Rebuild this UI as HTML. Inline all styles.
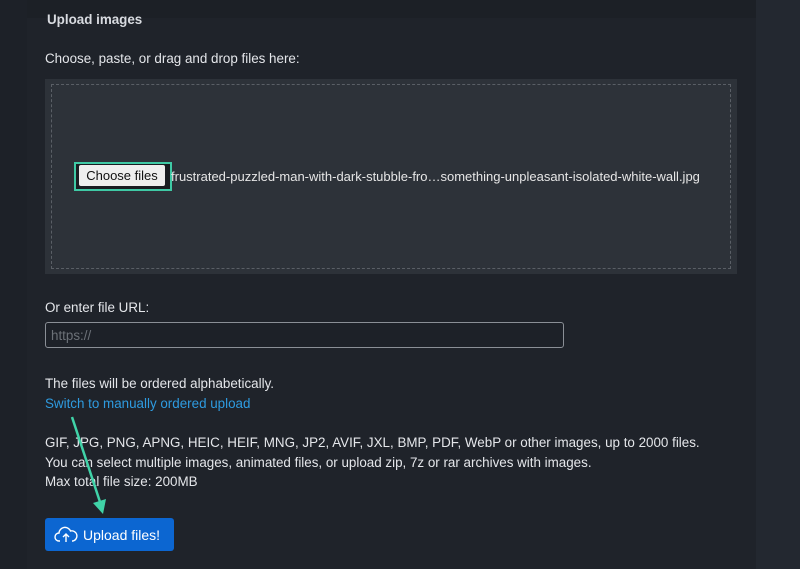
<!DOCTYPE html>
<html><head><style>
body{margin:0;width:800px;height:569px;background:#1d2128;font-family:"Liberation Sans",sans-serif;position:relative;overflow:hidden;color:#e4e6ea}
.t{position:absolute;font-size:13.4px;white-space:nowrap}
</style></head><body>
<div style="position:absolute;left:27px;top:0;width:729px;height:569px;background:#1f232a"></div>
<div style="position:absolute;left:756px;top:0;width:44px;height:569px;background:#232830"></div>
<div style="position:absolute;left:27px;top:0;width:729px;height:18px;background:#1c2026"></div>
<div class="t" style="left:47px;top:12px;font-weight:bold;color:#d8dbe0">Upload images</div>
<div class="t" style="left:45px;top:51px">Choose, paste, or drag and drop files here:</div>
<div style="position:absolute;left:45px;top:79px;width:692px;height:195px;background:#2d3239"></div>
<div style="position:absolute;left:51px;top:84px;width:678px;height:183px;border:1px dashed #5a5f66"></div>
<div style="position:absolute;left:74px;top:162px;width:94px;height:25px;border:2px solid #3fc9a5;background:#1a1d22"></div>
<div style="position:absolute;left:79px;top:165px;width:86px;height:21px;background:#efefef;border-radius:2px;color:#111;font-size:13px;text-align:center;line-height:21px">Choose files</div>
<div class="t" style="left:171px;top:169px;color:#e6e6e6;font-size:13px">frustrated-puzzled-man-with-dark-stubble-fro…something-unpleasant-isolated-white-wall.jpg</div>
<div class="t" style="left:45px;top:300px">Or enter file URL:</div>
<div style="position:absolute;left:45px;top:322px;width:517px;height:24px;border:1px solid #8a8f96;border-radius:3px;background:#1d2128"></div>
<div class="t" style="left:51px;top:328px;color:#6c7178">https://</div>
<div class="t" style="left:45px;top:376px">The files will be ordered alphabetically.</div>
<div class="t" style="left:45px;top:396px;color:#2e9be0">Switch to manually ordered upload</div>
<div class="t" style="left:45px;top:435px">GIF, JPG, PNG, APNG, HEIC, HEIF, MNG, JP2, AVIF, JXL, BMP, PDF, WebP or other images, up to 2000 files.</div>
<div class="t" style="left:45px;top:455px">You can select multiple images, animated files, or upload zip, 7z or rar archives with images.</div>
<div class="t" style="left:45px;top:474px">Max total file size: 200MB</div>
<div style="position:absolute;left:45px;top:518px;width:129px;height:33px;background:#0c66d1;border-radius:3px"></div>
<svg style="position:absolute;left:54px;top:524px" width="24" height="22" viewBox="0 0 24 22"><path d="M6 17H5a4 4 0 0 1 0-8 6 6 0 0 1 11.5-2A4.5 4.5 0 0 1 19 17h-1" fill="none" stroke="#fff" stroke-width="1.4"/><path d="M12 18v-8M9 13l3-3 3 3" fill="none" stroke="#fff" stroke-width="1.4"/></svg>
<div class="t" style="left:83px;top:527px;color:#fff;font-size:14px">Upload files!</div>
<svg style="position:absolute;left:0;top:0" width="800" height="569"><path d="M72 417 L101 505" stroke="#40d3a8" stroke-width="2.5" fill="none"/><path d="M93 503 L103 514 L106 499" fill="#40d3a8"/></svg>
</body></html>
